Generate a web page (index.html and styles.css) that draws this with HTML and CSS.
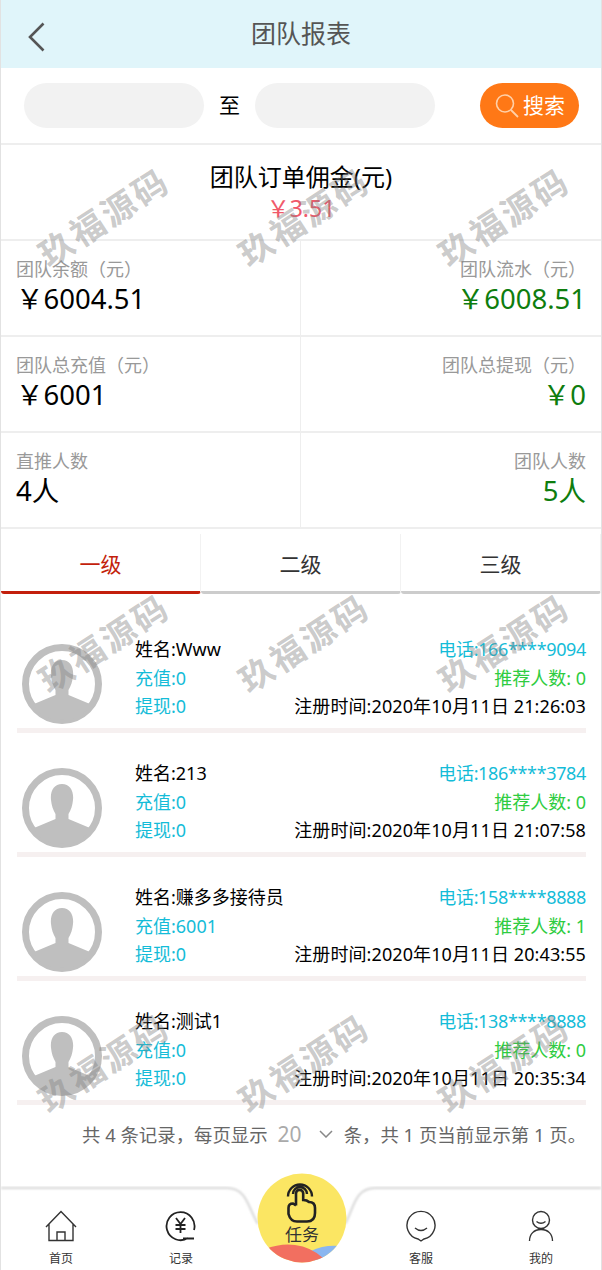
FILE: index.html
```html
<!DOCTYPE html>
<html lang="zh">
<head>
<meta charset="utf-8">
<title>团队报表</title>
<link rel="stylesheet" href="styles.css">
</head>
<body>
<div class="page">
  <header class="topbar">
    <svg class="back" width="20" height="32" viewBox="0 0 20 32"><path d="M16.500 2.500 L3 16 L16.500 29.500" fill="none" stroke="#555" stroke-width="2.600"/></svg>
    <h1 class="title">团队报表</h1>
  </header>
  <section class="search">
    <div class="date"></div>
    <span class="to">至</span>
    <div class="date"></div>
    <button class="go">
      <svg width="24" height="26" viewBox="0 0 24 26"><circle cx="10" cy="10.500" r="8.500" fill="none" stroke="#ffd0a8" stroke-width="1.600"/><path d="M16 17 L23 24" stroke="#ffd0a8" stroke-width="1.800"/></svg>
      <span class="go-text">搜索</span>
    </button>
  </section>
  <section class="commission">
    <div class="c-label">团队订单佣金(元)</div>
    <div class="c-value">￥3.51</div>
  </section>
  <section class="stats">
    <div class="stat"><div class="s-label">团队余额（元）</div><div class="s-value">￥6004.51</div></div>
    <div class="stat right"><div class="s-label">团队流水（元）</div><div class="s-value">￥6008.51</div></div>
    <div class="stat"><div class="s-label">团队总充值（元）</div><div class="s-value">￥6001</div></div>
    <div class="stat right"><div class="s-label">团队总提现（元）</div><div class="s-value">￥0</div></div>
    <div class="stat"><div class="s-label">直推人数</div><div class="s-value">4人</div></div>
    <div class="stat right"><div class="s-label">团队人数</div><div class="s-value">5人</div></div>
  </section>
  <nav class="levels">
    <div class="level on">一级</div>
    <div class="level">二级</div>
    <div class="level">三级</div>
  </nav>
  <section class="members">
    <article class="member">
      <svg class="avatar" viewBox="0 0 80 80"><use href="#person"/></svg>
      <div class="info">
        <div class="line"><span class="name">姓名:Www</span><span class="tel">电话:166****9094</span></div>
        <div class="line"><span class="cyan">充值:0</span><span class="ref">推荐人数: 0</span></div>
        <div class="line"><span class="cyan">提现:0</span><span class="reg">注册时间:2020年10月11日 21:26:03</span></div>
      </div>
    </article>
    <article class="member">
      <svg class="avatar" viewBox="0 0 80 80"><use href="#person"/></svg>
      <div class="info">
        <div class="line"><span class="name">姓名:213</span><span class="tel">电话:186****3784</span></div>
        <div class="line"><span class="cyan">充值:0</span><span class="ref">推荐人数: 0</span></div>
        <div class="line"><span class="cyan">提现:0</span><span class="reg">注册时间:2020年10月11日 21:07:58</span></div>
      </div>
    </article>
    <article class="member">
      <svg class="avatar" viewBox="0 0 80 80"><use href="#person"/></svg>
      <div class="info">
        <div class="line"><span class="name">姓名:赚多多接待员</span><span class="tel">电话:158****8888</span></div>
        <div class="line"><span class="cyan">充值:6001</span><span class="ref">推荐人数: 1</span></div>
        <div class="line"><span class="cyan">提现:0</span><span class="reg">注册时间:2020年10月11日 20:43:55</span></div>
      </div>
    </article>
    <article class="member">
      <svg class="avatar" viewBox="0 0 80 80"><use href="#person"/></svg>
      <div class="info">
        <div class="line"><span class="name">姓名:测试1</span><span class="tel">电话:138****8888</span></div>
        <div class="line"><span class="cyan">充值:0</span><span class="ref">推荐人数: 0</span></div>
        <div class="line"><span class="cyan">提现:0</span><span class="reg">注册时间:2020年10月11日 20:35:34</span></div>
      </div>
    </article>
  </section>
  <div class="pager">
    <span>共 4 条记录，每页显示</span>
    <span class="size">20</span>
    <svg class="chev" width="14" height="8" viewBox="0 0 14 8"><path d="M1 1 L7 7 L13 1" fill="none" stroke="#888" stroke-width="1.500"/></svg>
    <span>条，共 1 页当前显示第 1 页。</span>
  </div>
  <footer class="tabbar">
    <svg class="edge" width="600" height="46" viewBox="0 0 600 46">
      <defs><filter id="soft" x="-5%" y="-20%" width="110%" height="140%"><feGaussianBlur stdDeviation="0.800"/></filter></defs>
      <path d="M0 2 H226 C246 2 247 22 257 38 M344 38 C353 22 354 2 374 2 H600" fill="none" stroke="#d6d6d6" stroke-width="2" filter="url(#soft)"/>
    </svg>
    <a class="tab">
      <svg width="32" height="32" viewBox="0 0 32 32"><path d="M1 17 L16 1.500 L31 17 M4 14 V30.500 H28 V14 M12 30.500 V22 H20 V30.500" fill="none" stroke="#333" stroke-width="1.400"/></svg>
      <span>首页</span>
    </a>
    <a class="tab">
      <svg width="32" height="32" viewBox="0 0 32 32"><path d="M23 28 A14 14 0 1 1 29 20 M18 28.500 H29" fill="none" stroke="#222" stroke-width="1.800"/><path d="M11 8 L15.500 14 L20 8 M15.500 14 V23 M10.500 15 H20.500 M10.500 19 H20.500" fill="none" stroke="#222" stroke-width="1.800"/></svg>
      <span>记录</span>
    </a>
    <div class="tab gap"></div>
    <a class="tab">
      <svg width="32" height="32" viewBox="0 0 32 32"><path d="M13 29 A14 14 0 1 1 19 29 L16 31 Z" fill="none" stroke="#333" stroke-width="1.400"/><path d="M10 18 Q16 23 22 18" fill="none" stroke="#333" stroke-width="1.400"/></svg>
      <span>客服</span>
    </a>
    <a class="tab">
      <svg width="32" height="32" viewBox="0 0 32 32"><circle cx="16" cy="10" r="8.500" fill="none" stroke="#333" stroke-width="1.400"/><path d="M11.500 11.500 Q16 15 20.500 11.500 M4.500 31 C4.500 24 9 19.500 16 19.500 C23 19.500 27.500 24 27.500 31" fill="none" stroke="#333" stroke-width="1.400"/></svg>
      <span>我的</span>
    </a>
    <a class="task">
      <svg class="task-bg" width="90" height="90" viewBox="0 0 90 90">
        <defs><clipPath id="disc"><circle cx="45" cy="45" r="44.500"/></clipPath></defs>
        <circle cx="45" cy="45" r="44.500" fill="#fbe663"/>
        <g clip-path="url(#disc)">
          <path d="M54 78 Q66 72 82 73 L82 95 H60 Z" fill="#8ab6f0"/>
          <path d="M8 76 Q24 70 38 72 Q54 74 66 85 L60 95 H8 Z" fill="#f26f60"/>
        </g>
      </svg>
      <svg class="hand" width="34" height="42" viewBox="0 0 34 42">
        <path d="M3 14.500 A12 12 0 0 1 27 14.500 M8 12 A7 7 0 0 1 22 12" fill="none" stroke="#222" stroke-width="2.400"/>
        <path d="M11 23.500 V11.500 A3.600 3.600 0 0 1 18.200 11.500 V18 Q22 18 24 20 Q30 20 30 26 V31 Q30 39.500 22 39.500 H12 Q5.500 39.500 3.500 32 V26 Q3.500 21.500 8 21.500 L11 23.500" fill="none" stroke="#222" stroke-width="2.600"/>
      </svg>
      <span class="task-text">任务</span>
    </a>
  </footer>
  <div class="marks" aria-hidden="true">
    <span class="mark m1">玖福源码</span><span class="mark m2">玖福源码</span><span class="mark m3">玖福源码</span>
    <span class="mark m4">玖福源码</span><span class="mark m5">玖福源码</span><span class="mark m6">玖福源码</span>
    <span class="mark m7">玖福源码</span><span class="mark m8">玖福源码</span><span class="mark m9">玖福源码</span>
  </div>
</div>
<svg class="defs" width="0" height="0">
  <defs>
    <clipPath id="round"><circle cx="40" cy="40" r="36"/></clipPath>
    <g id="person">
      <circle cx="40" cy="40" r="36.500" fill="none" stroke="#bfbfbf" stroke-width="7"/>
      <g clip-path="url(#round)">
        <path d="M40 16 C48 16 52 23 51 32 C50.500 37 49 42 46.500 46 V51 L68 60 V80 H12 V60 L33.500 51 V46 C31 42 29.500 37 29 32 C28 23 32 16 40 16 Z" fill="#bfbfbf"/>
      </g>
    </g>
  </defs>
</svg>
</body>
</html>
```
FILE: styles.css
```css
* { box-sizing: border-box; }
html, body { margin: 0; padding: 0; }
body {
  background: #e2e2e2;
  font-family: "Noto Sans", "Noto Sans CJK SC", sans-serif;
  color: #000;
}
.page {
  position: relative;
  width: 600px;
  height: 1270px;
  margin: 0 1px;
  background: #fff;
  overflow: hidden;
  display: flex;
  flex-direction: column;
}
.topbar {
  height: 68px;
  flex: none;
  background: #e0f5fa;
  display: flex;
  align-items: center;
  justify-content: center;
  position: relative;
}
.back { position: absolute; left: 26px; top: 21px; }
.title { margin: 0 0 2px; font-size: 25px; font-weight: 400; color: #555; line-height: 66px; }
.search {
  height: 77px;
  flex: none;
  padding: 15px 22px 15px 23px;
  display: flex;
  align-items: center;
  border-bottom: 2px solid #eee;
}
.date { width: 180px; height: 45px; border-radius: 23px; background: #f2f2f2; }
.to { width: 51px; text-align: center; font-size: 21px; line-height: 45px; }
.go {
  width: 99px;
  height: 45px;
  margin-left: auto;
  padding: 0 0 0 15px;
  border: 0;
  border-radius: 23px;
  background: #ff7816;
  color: #fff;
  font: inherit;
  font-size: 21px;
  display: flex;
  align-items: center;
  gap: 4px;
}
.go-text { margin-bottom: 4px; }
.commission { height: 96px; flex: none; text-align: center; border-bottom: 2px solid #eee; padding-top: 15px; }
.c-label { font-size: 24px; line-height: 33px; }
.c-value { font-size: 23px; line-height: 30px; color: #f0596a; }
.stats { display: grid; grid-template-columns: 1fr 1fr; flex: none; }
.stat {
  height: 96px;
  padding: 15px 15px 0;
  border-bottom: 2px solid #eee;
}
.stat:nth-child(odd) { border-right: 1px solid #eee; }
.s-label { font-size: 18px; line-height: 26px; color: #999; }
.s-value { font-size: 27.500px; line-height: 34px; }
.right { text-align: right; }
.right .s-value { color: #0e7d0e; }
.levels { display: flex; height: 60px; margin-top: 5px; flex: none; }
.level {
  width: 200px;
  text-align: center;
  font-size: 21px;
  line-height: 60px;
  color: #333;
  border-bottom: 3px solid #ccc;
  border-right: 1px solid #f2f2f2;
  border-radius: 0 0 3px 3px;
}
.level.on { color: #c31f0c; border-bottom-color: #c31f0c; }
.members { padding: 34px 15px 0 16px; flex: none; }
.member {
  height: 124px;
  display: flex;
  position: relative;
  padding: 8px 0 0;
}
.member::after {
  content: "";
  position: absolute;
  left: 0;
  right: 0;
  top: 100px;
  height: 5px;
  background: #f6f0f0;
}
.avatar { width: 80px; height: 80px; margin: 8px 0 0 5px; flex: none; }
.info { margin-left: 33px; flex: 1; margin-top: -1px; }
.line { display: flex; justify-content: space-between; font-size: 18px; line-height: 28.500px; white-space: nowrap; }
.cyan, .tel { color: #14bcd8; }
.tel { letter-spacing: -0.350px; }
.reg { letter-spacing: 0.100px; }
.ref { color: #2ecc40; }
.pager {
  display: flex;
  align-items: center;
  padding-left: 81px;
  margin-top: -5px;
  height: 30px;
  font-size: 18.400px;
  color: #666;
  white-space: nowrap;
  flex: none;
}
.size { margin: 0 17px 0 10px; color: #aaa; font-size: 21px; }
.chev { margin-right: 11px; }
.tabbar {
  position: absolute;
  left: 0;
  bottom: 0;
  width: 600px;
  height: 83px;
  display: grid;
  grid-template-columns: repeat(5, 120px);
}
.edge { position: absolute; left: 0; top: -1px; }
.tab {
  position: relative;
  display: flex;
  flex-direction: column;
  align-items: center;
  padding-top: 23px;
  font-size: 12px;
  line-height: 16px;
  color: #333;
}
.tab span { margin-top: 9px; }
.task {
  position: absolute;
  left: 256px;
  top: -14px;
  width: 90px;
  height: 90px;
  display: block;
}
.task-bg { position: absolute; left: 0; top: 0; }
.hand { position: absolute; left: 28px; top: 9px; }
.task-text { position: absolute; left: 0; right: 0; top: 51px; text-align: center; font-size: 17px; line-height: 22px; color: #333; }
.marks { position: absolute; inset: 0; pointer-events: none; }
.mark {
  position: absolute;
  width: 200px;
  margin-left: -100px;
  margin-top: -25px;
  text-align: center;
  font-size: 34px;
  line-height: 50px;
  font-weight: 700;
  letter-spacing: 3px;
  white-space: nowrap;
  color: rgba(130, 130, 130, .42);
  transform: rotate(-33deg);
}
.m1 { left: 103px; top: 217px; }
.m2 { left: 303px; top: 217px; }
.m3 { left: 503px; top: 217px; }
.m4 { left: 103px; top: 643px; }
.m5 { left: 303px; top: 643px; }
.m6 { left: 503px; top: 643px; }
.m7 { left: 103px; top: 1063px; }
.m8 { left: 303px; top: 1063px; }
.m9 { left: 503px; top: 1063px; }
.defs { position: absolute; }
```
